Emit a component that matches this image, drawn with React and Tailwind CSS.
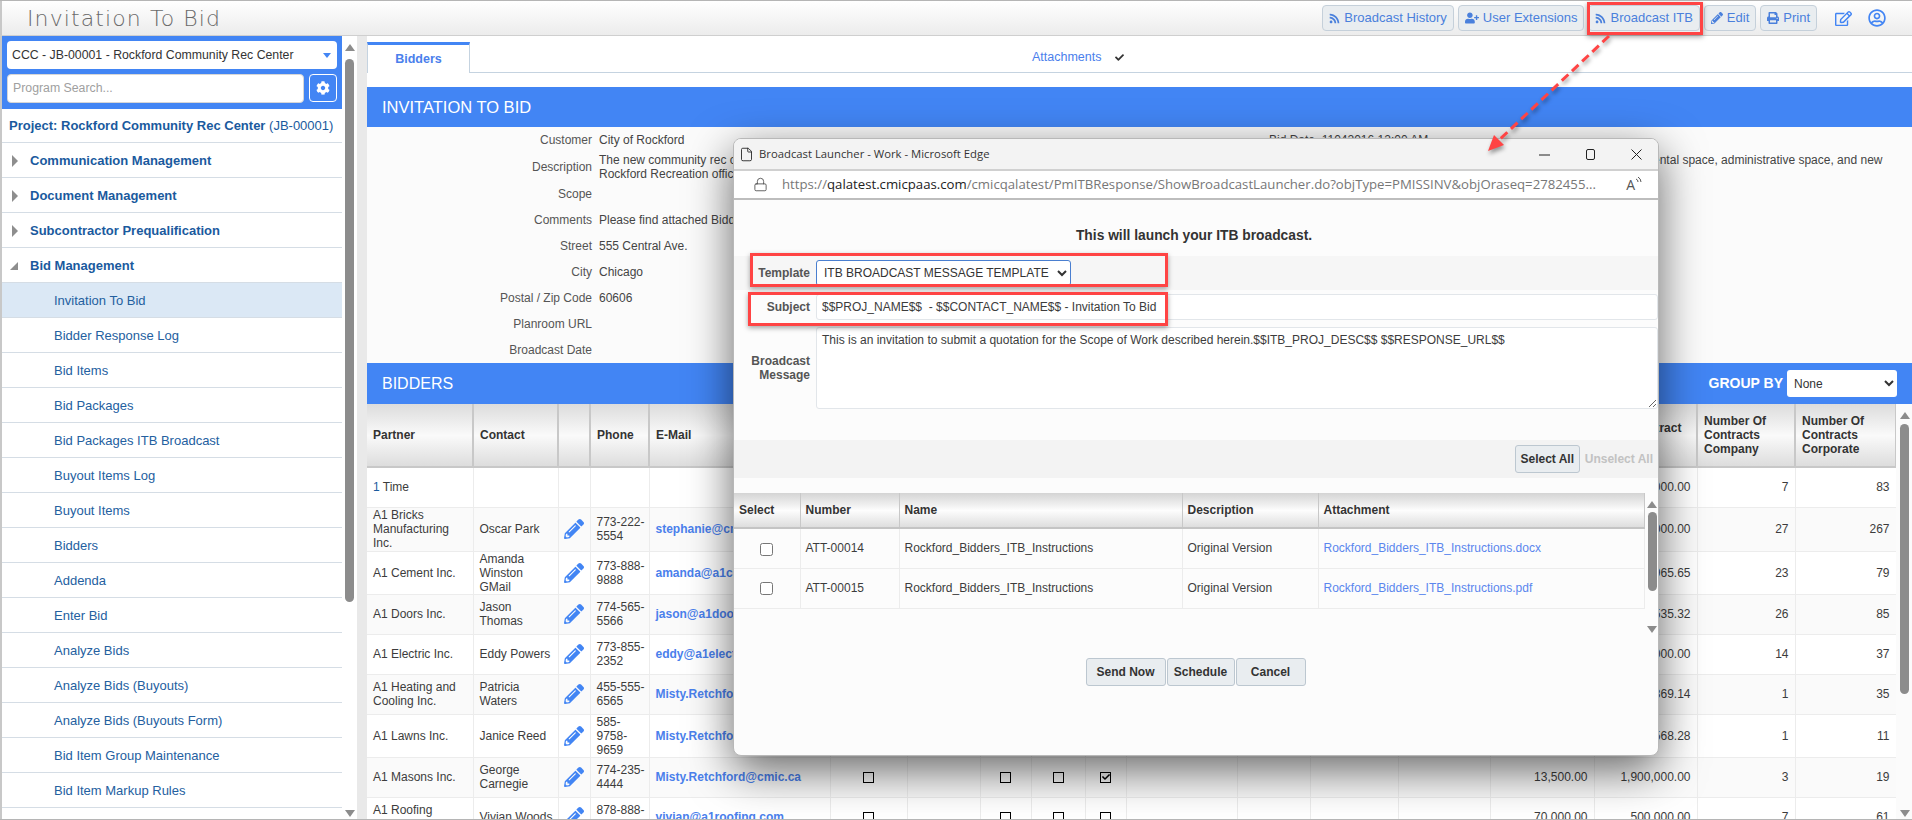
import React from "react";
import { FaRss, FaUserPlus, FaPencilAlt, FaPrint, FaRegEdit, FaRegUserCircle, FaCog, FaCheck } from "react-icons/fa";
import { File as FileIcon, Lock } from "lucide-react";

const menu = ["Invitation To Bid","Bidder Response Log","Bid Items","Bid Packages","Bid Packages ITB Broadcast","Buyout Items Log","Buyout Items","Bidders","Addenda","Enter Bid","Analyze Bids","Analyze Bids (Buyouts)","Analyze Bids (Buyouts Form)","Bid Item Group Maintenance","Bid Item Markup Rules"];
const groups = ["Communication Management","Document Management","Subcontractor Prequalification"];

function UpArrow() {
  return <div className="w-0 h-0 border-x-[5px] border-x-transparent border-b-[7px] border-b-[#8c8c8c]" />;
}
function DownArrow() {
  return <div className="w-0 h-0 border-x-[5px] border-x-transparent border-t-[7px] border-t-[#8c8c8c]" />;
}

function ToolBtn({ icon, label }) {
  return (
    <button className="h-[26px] px-[6px] flex items-center gap-[4px] rounded-[4px] border border-[#c5d0da] bg-[#e9edf0] text-[13px] text-[#4a80dc] whitespace-nowrap">
      {icon}
      {label}
    </button>
  );
}

function Box({ checked }) {
  return (
    <div className="w-[11px] h-[11px] mx-auto border border-black flex items-center justify-center">
      {checked ? <FaCheck className="text-[8px] text-black" /> : null}
    </div>
  );
}

const widths = [106,85,32,59,181,77,73,51,54,41,111,73,88,92,104,103,98,101];
const rows = [
  { h: "h-[40px]", partner: <><span className="text-[#1a5a9e]">1</span> Time</>, total: "1,000,000.00", a: "7", b: "83" },
  { h: "h-[44px]", partner: "A1 Bricks Manufacturing Inc.", contact: "Oscar Park", phone: "773-222-5554", mail: "stephanie@cmic.ca", total: "1,000,000.00", a: "27", b: "267" },
  { h: "h-[42px]", partner: "A1 Cement Inc.", contact: "Amanda Winston GMail", phone: "773-888-9888", mail: "amanda@a1cement.com", total: "1,965.65", a: "23", b: "79" },
  { h: "h-[40px]", partner: "A1 Doors Inc.", contact: <>Jason<br />Thomas</>, phone: "774-565-5566", mail: "jason@a1doors.com", total: "1,535.32", a: "26", b: "85" },
  { h: "h-[40px]", partner: "A1 Electric Inc.", contact: "Eddy Powers", phone: "773-855-2352", mail: "eddy@a1electric.com", total: "1,000.00", a: "14", b: "37" },
  { h: "h-[40px]", partner: "A1 Heating and Cooling Inc.", contact: "Patricia Waters", phone: "455-555-6565", mail: "Misty.Retchford@cmic.ca", total: "1,369.14", a: "1", b: "35" },
  { h: "h-[43px]", partner: "A1 Lawns Inc.", contact: "Janice Reed", phone: "585-9758-9659", mail: "Misty.Retchford@cmic.ca", total: "1,568.28", a: "1", b: "11" },
  { h: "h-[40px]", partner: "A1 Masons Inc.", contact: "George Carnegie", phone: "774-235-4444", mail: "Misty.Retchford@cmic.ca", boxes: true, checked: true, mid: "13,500.00", total: "1,900,000.00", a: "3", b: "19" },
  { h: "h-[40px]", partner: "A1 Roofing Company", contact: "Vivian Woods", phone: "878-888-8888", mail: "vivian@a1roofing.com", boxes: true, mid: "70,000.00", total: "500,000.00", a: "7", b: "61" },
];

const details = [
  ["Description", null, "h-[28px]"],
  ["Scope", "", "h-[26px]"],
  ["Comments", "Please find attached Bidder instructions.", "h-[26px]"],
  ["Street", "555 Central Ave.", "h-[26px]"],
  ["City", "Chicago", "h-[26px]"],
  ["Postal / Zip Code", "60606", "h-[26px]"],
  ["Planroom URL", "", "h-[26px]"],
  ["Broadcast Date", "", "h-[26px]"],
];

function Td({ className = "", children }) {
  return <td className={"border-r border-b border-[#ececec] pl-[6px] align-middle overflow-hidden " + className}>{children}</td>;
}

function Sidebar() {
  return (
    <aside className="w-[340px] h-full flex flex-col bg-white overflow-hidden">
      <div className="h-[73px] bg-[#4285f4] px-[5px] pt-[5px] flex flex-col gap-[5px] shrink-0">
        <div className="h-[28px] rounded-[4px] bg-white flex items-center justify-between pl-[5px] pr-[6px] text-[12.3px] text-[#333]">
          <span>CCC - JB-00001 - Rockford Community Rec Center</span>
          <span className="w-0 h-0 border-x-[4px] border-x-transparent border-t-[5px] border-t-[#4285f4]" />
        </div>
        <div className="flex gap-[5px]">
          <div className="w-[297px] h-[29px] rounded-[4px] bg-white border border-[#d6d6d6] flex items-center pl-[5px] text-[12.3px] text-[#a0a0a0]">Program Search...</div>
          <div className="w-[28px] h-[28px] rounded-[4px] border border-white flex items-center justify-center text-white text-[14px]"><FaCog /></div>
        </div>
      </div>
      <div className="h-[34px] shrink-0 border-b border-[#d5dde5] flex items-center pl-[7px] pt-[1px] text-[13px] text-[#1a5a9e] whitespace-nowrap">
        <span className="font-bold">Project: Rockford Community Rec Center</span>&nbsp;(JB-00001)
      </div>
      {groups.map((g) => (
        <div key={g} className="h-[35px] shrink-0 border-b border-[#d5dde5] flex items-center pt-[2px] text-[13px] font-bold text-[#1a5a9e]">
          <span className="ml-[10px] mr-[12px] w-0 h-0 border-y-[6px] border-y-transparent border-l-[6px] border-l-[#8e8e8e]" />
          {g}
        </div>
      ))}
      <div className="h-[35px] shrink-0 border-b border-[#d5dde5] flex items-center pt-[2px] text-[13px] font-bold text-[#1a5a9e]">
        <span className="ml-[8px] mr-[12px] w-0 h-0 border-l-[8px] border-l-transparent border-b-[8px] border-b-[#8e8e8e]" />
        Bid Management
      </div>
      {menu.map((m, i) => (
        <div key={m} className={"h-[35px] shrink-0 border-b border-[#d5dde5] flex items-center pl-[52px] pt-[2px] text-[13px] text-[#24609f] " + (i === 0 ? "bg-[#dbe8f5]" : "")}>{m}</div>
      ))}
    </aside>
  );
}

function Main() {
  return (
    <main className="flex-1 min-w-0 h-full flex flex-col bg-[#fbfbfb] overflow-hidden">
      <div className="h-[51px] shrink-0 bg-white pt-[6px]">
        <div className="h-[31px] flex border-b border-[#c5d3e0]">
          <div className="w-[103px] h-[31px] bg-white border-t-[3px] border-t-[#4285f4] border-x border-x-[#c5d3e0] flex items-center justify-center text-[12.5px] font-bold text-[#4a80ec]">Bidders</div>
          <div className="ml-[562px] flex items-center gap-[14px] text-[12.5px] text-[#4a80ec]">Attachments <FaCheck className="text-[9px] text-[#333]" /></div>
        </div>
      </div>
      <div className="h-[40px] shrink-0 bg-[#4285f4] flex items-center pl-[15px] text-[16.5px] text-white">INVITATION TO BID</div>
      <div className="h-[236px] shrink-0 text-[12px] text-[#444]">
        <div className="h-[26px] flex items-center">
          <div className="w-[225px] text-right font-medium text-[#555]">Customer</div>
          <div className="ml-[7px] w-[670px]">City of Rockford</div>
          <div>Bid Date&nbsp;&nbsp;11042016 12:00 AM</div>
        </div>
        {details.map(([label, value, h]) => (
          <div key={label} className={h + " flex items-center"}>
            <div className="w-[225px] text-right font-medium text-[#555]">{label}</div>
            <div className="ml-[7px] flex-1 min-w-0 leading-[14px] whitespace-nowrap">
              {value === null ? (
                <>
                  The new community rec center will provide a gymnasium, fitness rooms, a pool, multi-purpose rooms, a kitchen, meeting rooms, lounges, childcare, a cafeteria, a library, a gift shop, a lobby, storage, rental space, administrative space, and new<br />
                  Rockford Recreation offices.
                </>
              ) : value}
            </div>
          </div>
        ))}
      </div>
      <div className="h-[41px] shrink-0 bg-[#4285f4] flex items-center pl-[15px] pr-[15px] justify-between">
        <span className="text-[16px] text-white">BIDDERS</span>
        <div className="flex items-center gap-[4px]">
          <span className="text-[14px] font-bold text-white">GROUP BY</span>
          <select className="w-[110px] h-[27px] rounded-[3px] bg-white text-[12px] text-[#333] pl-[3px]" defaultValue="None"><option>None</option></select>
        </div>
      </div>
      <div className="flex-1 min-h-0 flex">
        <div className="w-[1529px] h-full overflow-hidden">
          <table className="table-fixed border-collapse w-[1529px] text-[12px] leading-[14px] text-[#3c3c3c]">
            <colgroup>{widths.map((w, i) => <col key={i} style={{ width: w }} />)}</colgroup>
            <thead>
              <tr className="h-[63px] bg-gradient-to-b from-[#dcdcdc] via-[#fafafa] to-[#dcdcdc] text-left font-bold text-[#333]">
                {["Partner","Contact","","Phone","E-Mail","","","","","","","","","","Total Contract Value","Number Of Contracts Company","Number Of Contracts Corporate"].map((t, i) => (
                  <th key={i} colSpan={i === 14 ? 2 : 1} className="border-r-2 border-b-2 border-[#c8c8c8] px-[6px] font-bold overflow-hidden">{i === 14 ? <div className="pl-[104px]">Total Contract<br />Value</div> : t}</th>
                ))}
              </tr>
            </thead>
            <tbody>
              {rows.map((r, i) => (
                <tr key={i} className={r.h + " " + (i % 2 ? "bg-[#fafafa]" : "bg-white")}>
                  <Td className="pr-[2px]">{r.partner}</Td>
                  <Td className="pr-[2px]">{r.contact}</Td>
                  <Td className="!pl-0">{r.contact ? <FaPencilAlt className="mx-auto text-[20px] text-[#4285f4]" /> : null}</Td>
                  <Td>{r.phone}</Td>
                  <Td className="font-bold text-[#4a80ec] whitespace-nowrap">{r.mail}</Td>
                  <Td className="pr-[6px]">{r.boxes ? <Box /> : null}</Td>
                  <Td />
                  <Td className="pr-[6px]">{r.boxes ? <Box /> : null}</Td>
                  <Td className="pr-[6px]">{r.boxes ? <Box /> : null}</Td>
                  <Td className="pr-[6px]">{r.boxes ? <Box checked={r.checked} /> : null}</Td>
                  <Td /><Td /><Td /><Td />
                  <Td className="text-right pr-[6px]">{r.mid}</Td>
                  <Td className="text-right whitespace-nowrap pr-[6px]">{r.total}</Td>
                  <Td className="text-right pr-[6px]">{r.a}</Td>
                  <Td className="text-right pr-[6px]">{r.b}</Td>
                </tr>
              ))}
            </tbody>
          </table>
        </div>
        <div className="w-[16px] h-full flex flex-col items-center pl-[1px]">
          <div className="mt-[8px]"><UpArrow /></div>
          <div className="mt-[5px] w-[9px] h-[270px] rounded-[5px] bg-[#8c8c8c]" />
          <div className="mt-auto mb-[2px]"><DownArrow /></div>
        </div>
      </div>
    </main>
  );
}

function Modal() {
  const th = "border-r border-[#c8c8c8] border-b-2 border-b-[#c4c4c4] px-[5px] text-left font-bold text-[#333]";
  const td = "border-r border-b border-[#ececec] px-[5px]";
  return (
    <section className="absolute left-[733px] top-[137px] w-[926px] h-[618px] rounded-[8px] border border-[#b8b8b8] bg-[#fcfcfc] overflow-hidden flex flex-col z-10 shadow-[0_14px_45px_rgba(0,0,0,0.6)]">
      <div className="h-[30px] shrink-0 bg-[#f3f3f3] flex items-center pl-[5px] text-[#333]">
        <FileIcon size={15} strokeWidth={1.4} className="text-[#222]" />
        <span className="ml-[5px] font-['Open_Sans',sans-serif] text-[11.3px]">Broadcast Launcher - Work - Microsoft Edge</span>
        <div className="ml-auto flex items-center gap-[35px] pr-[16px]">
          <svg width="11" height="11" viewBox="0 0 11 11"><path d="M0 6h11" stroke="#222" /></svg>
          <svg width="11" height="11" viewBox="0 0 11 11"><rect x="1.5" y="0.5" width="8" height="10" rx="1.5" fill="none" stroke="#222" /></svg>
          <svg width="11" height="11" viewBox="0 0 11 11"><path d="M0.5 0.5l10 10M10.5 0.5l-10 10" stroke="#222" /></svg>
        </div>
      </div>
      <div className="h-[31px] shrink-0 bg-white border-y-2 border-[#bdbdbd] border-t-[#d0d0d0] flex items-center pl-[19px] text-[#777]">
        <Lock size={15} strokeWidth={1.3} className="text-[#444]" />
        <span className="ml-[14px] font-['Open_Sans',sans-serif] text-[13.2px] whitespace-nowrap">https://<span className="text-[#222]">qalatest.cmicpaas.com</span>/cmicqalatest/PmITBResponse/ShowBroadcastLauncher.do?objType=PMISSINV&amp;objOraseq=2782455...</span>
        <div className="ml-auto mr-[16px] flex items-start text-[#555]">
          <span className="font-['Open_Sans',sans-serif] text-[14px] leading-[16px]">A</span>
          <svg width="7" height="9" viewBox="0 0 7 9"><path d="M1 2a3 3 0 0 1 2 3M3 0a6 6 0 0 1 3 5" fill="none" stroke="#555" /></svg>
        </div>
      </div>
      <div className="flex-1 min-h-0 flex flex-col text-[12px] text-[#3c3c3c]">
        <div className="h-[56px] shrink-0 pt-[28px] pr-[4px] text-center text-[13.8px] leading-[16px] font-bold text-[#333]">This will launch your ITB broadcast.</div>
        <div className="h-[34px] shrink-0 bg-[#f6f6f6] flex items-center">
          <div className="w-[76px] text-right font-bold text-[#555]">Template</div>
          <select className="ml-[6px] w-[255px] h-[26px] rounded-[3px] border border-[#4a7fd0] bg-white pl-[3px] text-[12px] text-[#333]" defaultValue="t"><option value="t">ITB BROADCAST MESSAGE TEMPLATE</option></select>
        </div>
        <div className="mt-[4px] h-[26px] shrink-0 flex items-center">
          <div className="w-[76px] text-right font-bold text-[#555]">Subject</div>
          <input readOnly value="$$PROJ_NAME$$  - $$CONTACT_NAME$$ - Invitation To Bid" className="ml-[6px] w-[842px] h-[26px] rounded-[3px] border border-[#e2e6ea] bg-white pl-[5px] text-[12px] text-[#3c3c3c]" />
        </div>
        <div className="mt-[7px] h-[82px] shrink-0 flex items-center">
          <div className="w-[76px] text-right font-bold text-[#555] leading-[14px]">Broadcast Message</div>
          <textarea readOnly value="This is an invitation to submit a quotation for the Scope of Work described herein.$$ITB_PROJ_DESC$$ $$RESPONSE_URL$$" className="ml-[6px] w-[842px] h-[82px] rounded-[3px] border border-[#e2e6ea] bg-white px-[5px] py-[3px] text-[12px] text-[#3c3c3c]" />
        </div>
        <div className="mt-[31px] h-[38px] shrink-0 bg-[#f3f3f3] flex items-center justify-end pr-[5px] gap-[5px] font-bold">
          <button className="w-[65px] h-[28px] rounded-[3px] border border-[#bcc7d0] bg-[#e9edf0] text-[#333] font-bold">Select All</button>
          <span className="text-[#c2c2c2]">Unselect All</span>
        </div>
        <div className="mt-[15px] flex items-start">
          <table className="table-fixed border-collapse w-[910px] text-[12px]">
            <colgroup>
              <col className="w-[66px]" /><col className="w-[99px]" /><col className="w-[283px]" /><col className="w-[136px]" /><col className="w-[326px]" />
            </colgroup>
            <thead>
              <tr className="h-[35px] bg-gradient-to-b from-[#d4d4d4] via-[#fdfdfd] to-[#dcdcdc]">
                {["Select","Number","Name","Description","Attachment"].map((t) => <th key={t} className={th}>{t}</th>)}
              </tr>
            </thead>
            <tbody>
              {[["ATT-00014","docx"],["ATT-00015","pdf"]].map(([n, e]) => (
                <tr key={n} className="h-[40px]">
                  <td className={td + " text-center"}><input type="checkbox" className="align-middle" /></td>
                  <td className={td}>{n}</td>
                  <td className={td}>Rockford_Bidders_ITB_Instructions</td>
                  <td className={td}>Original Version</td>
                  <td className={td + " text-[#5a86ee]"}>Rockford_Bidders_ITB_Instructions.{e}</td>
                </tr>
              ))}
            </tbody>
          </table>
          <div className="ml-[3px] w-[9px] h-[140px] flex flex-col items-center">
            <div className="mt-[8px]"><UpArrow /></div>
            <div className="mt-[4px] w-[9px] h-[79px] rounded-[5px] bg-[#8c8c8c]" />
            <div className="mt-auto"><DownArrow /></div>
          </div>
        </div>
        <div className="mt-[25px] flex justify-center gap-px pr-[1px] font-bold">
          {[["Send Now","w-[80px]"],["Schedule","w-[68px]"],["Cancel","w-[70px]"]].map(([t, w]) => (
            <button key={t} className={w + " h-[28px] rounded-[3px] border border-[#bcc7d0] bg-[#e9edf0] text-[#333] font-bold"}>{t}</button>
          ))}
        </div>
      </div>
    </section>
  );
}

export default function App() {
  return (
    <div className="relative w-[1912px] h-[820px] overflow-hidden flex flex-col bg-white border-t border-b border-[#b5b5b5] font-['Liberation_Sans',Arial,sans-serif]">
      <header className="h-[35px] shrink-0 flex items-center bg-gradient-to-b from-white to-[#ececec] border-b border-[#cfcfcf] border-l-2 border-l-[#c8c8c8] pl-[25px]">
        <h1 className="font-['DejaVu_Sans',sans-serif] font-extralight text-[22px] tracking-[1.1px] text-[#6a6a6a]">Invitation To Bid</h1>
        <div className="ml-auto flex items-center">
          <div className="flex gap-[4px]">
            <ToolBtn icon={<FaRss className="text-[11px]" />} label="Broadcast History" />
            <ToolBtn icon={<FaUserPlus className="text-[14px]" />} label="User Extensions" />
            <ToolBtn icon={<FaRss className="text-[11px]" />} label="Broadcast ITB" />
            <ToolBtn icon={<FaPencilAlt className="text-[12px]" />} label="Edit" />
            <ToolBtn icon={<FaPrint className="text-[12px]" />} label="Print" />
          </div>
          <FaRegEdit className="ml-[18px] text-[17px] text-[#4285f4]" />
          <FaRegUserCircle className="ml-[16px] mr-[26px] text-[18px] text-[#4285f4]" />
        </div>
      </header>
      <div className="flex-1 min-h-0 flex border-l-2 border-l-[#c8c8c8]">
        <Sidebar />
        <div className="w-[15px] h-full bg-white flex flex-col items-center">
          <div className="mt-[8px]"><UpArrow /></div>
          <div className="mt-[8px] w-[9px] h-[543px] rounded-[5px] bg-[#8c8c8c]" />
          <div className="mt-auto mb-[2px]"><DownArrow /></div>
        </div>
        <div className="w-[10px] h-full bg-[#e9e9e9]" />
        <Main />
      </div>
      <Modal />
      <div className="absolute left-[1587px] top-[1px] w-[116px] h-[33px] border-[3px] border-[#ff4444] z-20 shadow-[0_2px_5px_rgba(0,0,0,0.35)]" />
      <div className="absolute left-[750px] top-[252px] w-[418px] h-[34px] border-[3px] border-[#ff4444] z-20 shadow-[0_2px_5px_rgba(0,0,0,0.35)]" />
      <div className="absolute left-[748px] top-[291px] w-[420px] h-[34px] border-[3px] border-[#ff4444] z-20 shadow-[0_2px_5px_rgba(0,0,0,0.35)]" />
      <svg className="absolute left-[1480px] top-[32px] z-20 drop-shadow-[1px_3px_2px_rgba(0,0,0,0.4)]" width="135" height="125" viewBox="0 0 135 125">
        <line x1="129" y1="3" x2="16" y2="110" stroke="#ff4444" strokeWidth="3" strokeDasharray="9 5" />
        <polygon points="8,118 14,102 24,112" fill="#ff4444" />
      </svg>
    </div>
  );
}
